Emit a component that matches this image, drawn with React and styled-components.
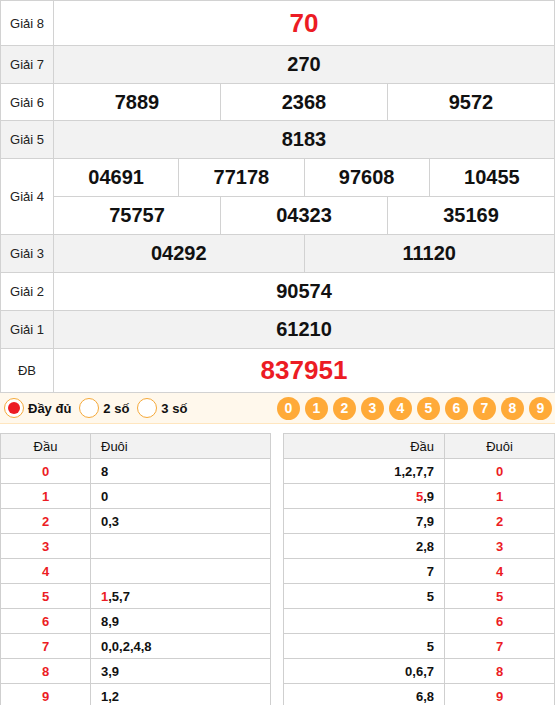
import React from "react";
import styled, { createGlobalStyle } from "styled-components";

const GlobalStyle = createGlobalStyle`
  body {
    margin: 0;
    font-family: "Liberation Sans", Arial, sans-serif;
    background: #fff;
    color: #111;
  }
`;

const prizes = [
  { label: "Giải 8", rows: [["70"]], big: true, h: 44 },
  { label: "Giải 7", rows: [["270"]], h: 37 },
  { label: "Giải 6", rows: [["7889", "2368", "9572"]], h: 36 },
  { label: "Giải 5", rows: [["8183"]], h: 37 },
  {
    label: "Giải 4",
    rows: [
      ["04691", "77178", "97608", "10455"],
      ["75757", "04323", "35169"],
    ],
    h: 37,
  },
  { label: "Giải 3", rows: [["04292", "11120"]], h: 37 },
  { label: "Giải 2", rows: [["90574"]], h: 37 },
  { label: "Giải 1", rows: [["61210"]], h: 37 },
  { label: "ĐB", rows: [["837951"]], big: true, h: 43 },
];

// a leading * paints the first digit red
const head = [
  ["0", "8"],
  ["1", "0"],
  ["2", "0,3"],
  ["3", ""],
  ["4", ""],
  ["5", "*1,5,7"],
  ["6", "8,9"],
  ["7", "0,0,2,4,8"],
  ["8", "3,9"],
  ["9", "1,2"],
];

const tail = [
  ["1,2,7,7", "0"],
  ["*5,9", "1"],
  ["7,9", "2"],
  ["2,8", "3"],
  ["7", "4"],
  ["5", "5"],
  ["", "6"],
  ["5", "7"],
  ["0,6,7", "8"],
  ["6,8", "9"],
];

const Page = styled.div`
  width: 555px;
`;

const Results = styled.div`
  border: 1px solid #d2d2d2;
  border-bottom: none;
`;

const Row = styled.div`
  display: flex;
  background: ${(p) => (p.$alt ? "#f2f2f2" : "#fff")};
  border-bottom: 1px solid #d2d2d2;
`;

const Label = styled.div`
  width: 52px;
  flex: none;
  border-right: 1px solid #d2d2d2;
  display: flex;
  align-items: center;
  justify-content: center;
  font-size: 13px;
  color: #222;
`;

const Lines = styled.div`
  flex: 1;
  display: flex;
  flex-direction: column;
`;

const Line = styled.div`
  display: flex;
  height: ${(p) => p.$h}px;
  & + & {
    border-top: 1px solid #d2d2d2;
  }
`;

const Num = styled.div`
  flex: 1;
  display: flex;
  align-items: center;
  justify-content: center;
  font-weight: bold;
  font-size: ${(p) => (p.$big ? 26 : 20)}px;
  color: ${(p) => (p.$big ? "#ec1c24" : "#111")};
  & + & {
    border-left: 1px solid #d2d2d2;
  }
`;

const Options = styled.div`
  display: flex;
  align-items: center;
  justify-content: space-between;
  height: 30px;
  padding: 0 3px 0 4px;
  background: #fff8ec;
  border-bottom: 1px solid #ffe6bf;
`;

const Radios = styled.div`
  display: flex;
  align-items: center;
  gap: 8px;
`;

const Radio = styled.label`
  display: flex;
  align-items: center;
  gap: 4px;
  font-size: 13px;
  font-weight: bold;
  color: #111;
`;

const Dot = styled.span`
  width: 18px;
  height: 18px;
  border-radius: 50%;
  border: 1px solid #f5a93a;
  background: #fff;
  display: flex;
  align-items: center;
  justify-content: center;
  &::after {
    content: "";
    width: 12px;
    height: 12px;
    border-radius: 50%;
    background: ${(p) => (p.$on ? "#ec1c24" : "transparent")};
  }
`;

const Digits = styled.div`
  display: flex;
  gap: 5px;
`;

const Digit = styled.span`
  width: 23px;
  height: 23px;
  border-radius: 50%;
  background: #ffaa38;
  color: #fff;
  font-weight: bold;
  font-size: 14px;
  display: flex;
  align-items: center;
  justify-content: center;
`;

const Loto = styled.div`
  display: grid;
  grid-template-columns: 271px 272px;
  gap: 12px;
  margin-top: 9px;
`;

const Table = styled.table`
  border-collapse: collapse;
  width: 100%;
  table-layout: fixed;
  font-size: 13px;
  th,
  td {
    border: 1px solid #cfcfcf;
    height: 24px;
    padding: 0 10px;
  }
  th {
    background: #f2f2f2;
    font-weight: normal;
    color: #111;
  }
  td {
    font-weight: bold;
    color: #111;
  }
`;

const Cell = styled.td`
  text-align: ${(p) => p.$align || "left"};
  && {
    color: ${(p) => (p.$red ? "#ec1c24" : "#111")};
  }
`;

const Head = styled.th`
  text-align: ${(p) => p.$align || "left"};
`;

const Red = styled.span`
  color: #ec1c24;
`;

const Digs = ({ v }) => {
  if (v.startsWith("*")) {
    const s = v.slice(1);
    return (
      <>
        <Red>{s[0]}</Red>
        {s.slice(1)}
      </>
    );
  }
  return v;
};

export default function App() {
  return (
    <Page>
      <GlobalStyle />
      <Results>
        {prizes.map((p, i) => (
          <Row key={p.label} $alt={i % 2 === 1}>
            <Label>{p.label}</Label>
            <Lines>
              {p.rows.map((r, j) => (
                <Line key={j} $h={p.h}>
                  {r.map((n) => (
                    <Num key={n} $big={p.big}>
                      {n}
                    </Num>
                  ))}
                </Line>
              ))}
            </Lines>
          </Row>
        ))}
      </Results>
      <Options>
        <Radios>
          <Radio>
            <Dot $on />
            Đầy đủ
          </Radio>
          <Radio>
            <Dot />2 số
          </Radio>
          <Radio>
            <Dot />3 số
          </Radio>
        </Radios>
        <Digits>
          {"0123456789".split("").map((d) => (
            <Digit key={d}>{d}</Digit>
          ))}
        </Digits>
      </Options>
      <Loto>
        <Table>
          <colgroup>
            <col style={{ width: 90 }} />
            <col />
          </colgroup>
          <thead>
            <tr>
              <Head $align="center">Đầu</Head>
              <Head>Đuôi</Head>
            </tr>
          </thead>
          <tbody>
            {head.map(([a, b]) => (
              <tr key={a}>
                <Cell $align="center" $red>
                  {a}
                </Cell>
                <Cell>
                  <Digs v={b} />
                </Cell>
              </tr>
            ))}
          </tbody>
        </Table>
        <Table>
          <colgroup>
            <col />
            <col style={{ width: 110 }} />
          </colgroup>
          <thead>
            <tr>
              <Head $align="right">Đầu</Head>
              <Head $align="center">Đuôi</Head>
            </tr>
          </thead>
          <tbody>
            {tail.map(([a, b]) => (
              <tr key={b}>
                <Cell $align="right">
                  <Digs v={a} />
                </Cell>
                <Cell $align="center" $red>
                  {b}
                </Cell>
              </tr>
            ))}
          </tbody>
        </Table>
      </Loto>
    </Page>
  );
}
